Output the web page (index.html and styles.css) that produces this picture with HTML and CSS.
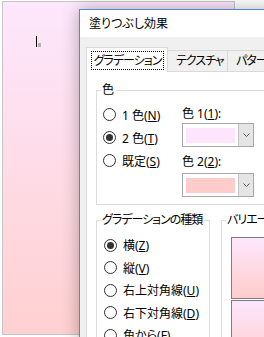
FILE: index.html
```html
<!DOCTYPE html>
<html lang="ja">
<head>
    <meta charset="UTF-8">
    <title>塗りつぶし効果</title>
    <link rel="stylesheet" href="styles.css">
</head>
<body>
    <!-- スライド上の図形 -->
    <div class="slide">
        <div class="caret"><span class="caret-bar"></span><span class="caret-dot"></span></div>
    </div>

    <!-- 塗りつぶし効果ダイアログ -->
    <div class="dialog">
        <div class="titlebar">塗りつぶし効果</div>
        <div class="dialog-body">
            <div class="tabs">
                <div class="tab tab-active"><span class="focus">グラデーション</span></div>
                <div class="tab tab-texture">テクスチャ</div>
                <div class="tab">パターン</div>
                <div class="tab">図</div>
            </div>

            <div class="panel">
                <!-- 色 -->
                <fieldset class="group group-color">
                    <legend>色</legend>
                    <div class="color-grid">
                        <div class="radio-list">
                            <div class="radio"><span class="radio-mark"></span><span>1 色(<u>N</u>)</span></div>
                            <div class="radio"><span class="radio-mark checked"></span><span>2 色(<u>T</u>)</span></div>
                            <div class="radio"><span class="radio-mark"></span><span>既定(<u>S</u>)</span></div>
                        </div>
                        <div class="color-pickers">
                            <div class="field-label">色 1(<u>1</u>):</div>
                            <div class="combo">
                                <span class="swatch swatch-1"></span>
                                <span class="combo-btn">
                                    <svg width="7" height="4" viewBox="0 0 7 4"><path d="M0.5 0.5 L3.5 3.5 L6.5 0.5" fill="none" stroke="#555" stroke-width="1"/></svg>
                                </span>
                            </div>
                            <div class="field-label field-label-2">色 2(<u>2</u>):</div>
                            <div class="combo combo-2">
                                <span class="swatch swatch-2"></span>
                                <span class="combo-btn">
                                    <svg width="7" height="4" viewBox="0 0 7 4"><path d="M0.5 0.5 L3.5 3.5 L6.5 0.5" fill="none" stroke="#555" stroke-width="1"/></svg>
                                </span>
                            </div>
                        </div>
                    </div>
                </fieldset>

                <div class="lower">
                    <!-- グラデーションの種類 -->
                    <fieldset class="group group-type">
                        <legend class="legend-kana">グラデーションの種類</legend>
                        <div class="type-list">
                            <div class="radio"><span class="radio-mark checked"></span><span>横(<u>Z</u>)</span></div>
                            <div class="radio"><span class="radio-mark"></span><span>縦(<u>V</u>)</span></div>
                            <div class="radio"><span class="radio-mark"></span><span>右上対角線(<u>U</u>)</span></div>
                            <div class="radio"><span class="radio-mark"></span><span>右下対角線(<u>D</u>)</span></div>
                            <div class="radio"><span class="radio-mark"></span><span>角から(<u>F</u>)</span></div>
                        </div>
                    </fieldset>

                    <!-- バリエーション -->
                    <fieldset class="group group-variation">
                        <legend class="legend-kana">バリエーション</legend>
                        <div class="variation-list">
                            <div class="preview"></div>
                            <div class="preview"></div>
                        </div>
                    </fieldset>
                </div>
            </div>
        </div>
    </div>
</body>
</html>
```

FILE: styles.css
```css
/* 全体 */
* {
    margin: 0;
    padding: 0;
    box-sizing: border-box;
}

html, body {
    overflow: hidden;
}

body {
    position: relative;
    width: 264px;
    height: 337px;
    background: #fff;
    font-family: "Noto Sans", "Noto Sans CJK JP", sans-serif;
    font-size: 12px;
    font-feature-settings: "palt";
    color: #000;
}

u {
    text-decoration-thickness: 1px;
    text-underline-offset: 1px;
}

/* スライドの図形 */
.slide {
    margin: 1px 0 0 2px;
    width: 233px;
    height: 334px;
    border: 1px solid #c6c6c6;
    background: linear-gradient(#fde7fd, #ffd0d0);
    padding: 34px 0 0 33px;
}

.caret {
    display: flex;
    align-items: flex-end;
    gap: 1px;
}

.caret-bar {
    width: 1px;
    height: 11px;
    background: #000;
}

.caret-dot {
    width: 3px;
    height: 4px;
    background: #b8b0b8;
}

/* ダイアログ */
.dialog {
    position: absolute;
    left: 79px;
    top: 9px;
    width: 320px;
    height: 340px;
    border: 1px solid #4f8bca;
    background: #f0f0f0;
    box-shadow: 0 0 16px rgba(0, 0, 0, 0.3);
}

.titlebar {
    height: 27px;
    line-height: 27px;
    background: #fff;
    padding-left: 9px;
}

.dialog-body {
    padding: 10px 0 0 6px;
}

/* タブ */
.tabs {
    display: flex;
    align-items: flex-end;
    height: 24px;
}

.tab {
    height: 21px;
    border: 1px solid #d9d9d9;
    border-bottom: none;
    background: #f0f0f0;
    padding: 0 8px;
    line-height: 19px;
    margin-left: -1px;
    white-space: nowrap;
    letter-spacing: -1px;
}

.tab-active {
    width: 82px;
    height: 25px;
    margin: 0 0 -1px 0;
    padding: 3px 0 0 4px;
    background: #fff;
    position: relative;
    z-index: 1;
}

.focus {
    display: block;
    width: 73px;
    height: 19px;
    border: 1px dotted #000;
    line-height: 17px;
    text-align: center;
}

.tab-texture {
    width: 61px;
    text-align: center;
}

.panel {
    height: 300px;
    border: 1px solid #d9d9d9;
    background: #fff;
    padding: 11px 0 0 9px;
}

/* グループボックス */
.group {
    border: 1px solid #dcdcdc;
    padding: 0;
    min-width: 0;
}

.group legend {
    margin-left: 4px;
    padding: 0 2px 0 1px;
    line-height: 14px;
    white-space: nowrap;
}

.group .legend-kana {
    letter-spacing: -1px;
}

.group-color {
    margin-right: 9px;
}

.color-grid {
    display: grid;
    grid-template-columns: 79px auto;
    padding: 6px 0 7px 6px;
}

.radio {
    display: flex;
    align-items: center;
    gap: 6px;
    height: 23px;
    white-space: nowrap;
}

.radio-mark {
    width: 13px;
    height: 13px;
    flex-shrink: 0;
    border: 1px solid #333;
    border-radius: 50%;
    background: #fff;
    display: flex;
    align-items: center;
    justify-content: center;
}

.radio-mark.checked::after {
    content: '';
    width: 7px;
    height: 7px;
    border-radius: 50%;
    background: #333;
}

.color-pickers {
    padding-top: 4px;
}

.field-label {
    line-height: 14px;
    margin-bottom: 2px;
}

.field-label-2 {
    margin-top: 8px;
    margin-bottom: 4px;
}

/* コンボボックス */
.combo {
    display: flex;
    width: 72px;
    height: 24px;
    border: 1px solid #a8a8a8;
    background: #fff;
}

.swatch {
    width: 49px;
    height: 15px;
    margin: 4px 3px 3px 3px;
}

.swatch-1 {
    background: #fde6fd;
}

.swatch-2 {
    background: #ffcccc;
}

.combo-btn {
    flex: 1;
    background: #e5e5e5;
    border-left: 1px solid #c4c4c4;
    display: flex;
    align-items: center;
    justify-content: center;
}

/* 下段 */
.lower {
    display: flex;
    gap: 11px;
    margin-top: 8px;
}

.group-type {
    width: 114px;
    flex-shrink: 0;
}

.type-list {
    padding: 7px 0 0 7px;
}

.type-list .radio {
    height: 22.5px;
}

.group-variation {
    flex: 1;
    margin-right: 9px;
}

.variation-list {
    display: flex;
    flex-direction: column;
    gap: 1px;
    padding: 10px 0 0 9px;
}

.preview {
    width: 70px;
    height: 62px;
    border: 1px solid #7d7d7d;
    background: linear-gradient(#fde7fd, #ffcccc);
}
```
